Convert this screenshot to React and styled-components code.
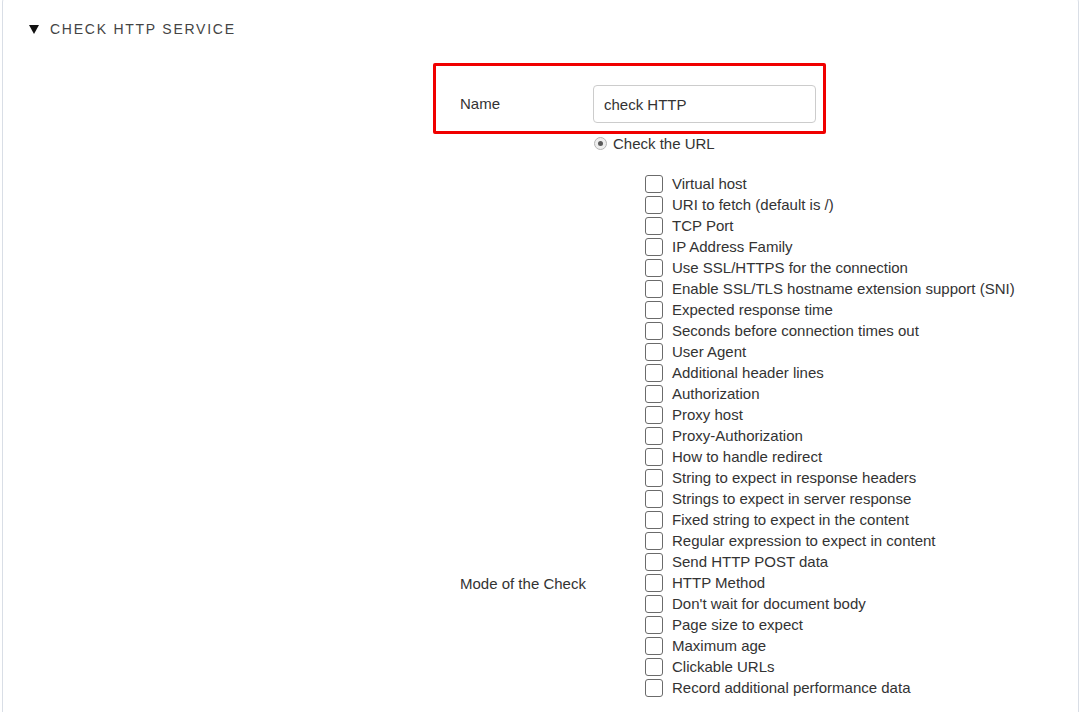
import React from "react";
import styled, { createGlobalStyle } from "styled-components";

const GlobalStyle = createGlobalStyle`
  html, body {
    margin: 0;
    padding: 0;
    background: #fff;
    font-family: "Liberation Sans", Arial, sans-serif;
    color: #333;
    overflow: hidden;
  }
`;

const options = [
  "Virtual host",
  "URI to fetch (default is /)",
  "TCP Port",
  "IP Address Family",
  "Use SSL/HTTPS for the connection",
  "Enable SSL/TLS hostname extension support (SNI)",
  "Expected response time",
  "Seconds before connection times out",
  "User Agent",
  "Additional header lines",
  "Authorization",
  "Proxy host",
  "Proxy-Authorization",
  "How to handle redirect",
  "String to expect in response headers",
  "Strings to expect in server response",
  "Fixed string to expect in the content",
  "Regular expression to expect in content",
  "Send HTTP POST data",
  "HTTP Method",
  "Don't wait for document body",
  "Page size to expect",
  "Maximum age",
  "Clickable URLs",
  "Record additional performance data",
];

const App = () => {
  return <>
    <GlobalStyle />
    <Page>
      <Header>
        <Triangle />
        <Title>Check HTTP service</Title>
      </Header>

      <Form>
        {/* highlighted row */}
        <NameRow>
          <Label>Name</Label>
          <TextInput defaultValue="check HTTP" />
        </NameRow>

        <ModeRow>
          <Label offset={441}>Mode of the Check</Label>
          <Value>
            <RadioRow>
              <Radio />
              <span>Check the URL</span>
            </RadioRow>
            <OptionList>
              {options.map(opt => (
                <OptionRow key={opt}>
                  <Box />
                  <span>{opt}</span>
                </OptionRow>
              ))}
            </OptionList>
          </Value>
        </ModeRow>
      </Form>
    </Page>
  </>
}

export default App;

const Page = styled.div`
  margin: -4px 0 0 2px;
  min-height: 760px;
  border: 1px solid #d9dee6;
  border-radius: 6px;
  box-sizing: border-box;
`

const Header = styled.div`
  display: flex;
  align-items: center;
  padding: 23px 0 0 26px;
  height: 18px;
`

const Triangle = styled.span`
  width: 10px;
  height: 9px;
  background: #111;
  clip-path: polygon(0 0, 100% 0, 50% 100%);
  margin-right: 11px;
  margin-top: 1px;
`

const Title = styled.span`
  font-size: 14px;
  letter-spacing: 1.75px;
  text-transform: uppercase;
  color: #444;
`

const Form = styled.div`
  display: flex;
  flex-direction: column;
  align-items: flex-start;
  margin: 25px 0 0 430px;
  white-space: nowrap;
`

const NameRow = styled.div`
  display: flex;
  align-items: center;
  border: 3px solid #f00000;
  border-radius: 2px;
  padding: 19px 7px 8px 24px;
`

const Label = styled.div`
  width: 133px;
  flex-shrink: 0;
  font-size: 15px;
  line-height: 18px;
  color: #333;
  padding-top: ${p => p.offset || 0}px;
`

const TextInput = styled.input`
  width: 223px;
  height: 38px;
  box-sizing: border-box;
  border: 1px solid #ccc;
  border-radius: 4px;
  padding: 0 10px;
  font-family: "Liberation Sans", Arial, sans-serif;
  font-size: 15px;
  color: #333;
  outline: none;
`

const ModeRow = styled.div`
  display: flex;
  padding-left: 27px;
`

const Value = styled.div`
  display: flex;
  flex-direction: column;
`

const RadioRow = styled.div`
  display: flex;
  align-items: center;
  gap: 6px;
  height: 18px;
  font-size: 15px;
  color: #333;
`

const Radio = styled.span`
  width: 11px;
  height: 11px;
  flex-shrink: 0;
  border-radius: 50%;
  border: 1px solid #b5b5b5;
  background: #eee;
  display: flex;
  align-items: center;
  justify-content: center;
  margin-left: 1px;

  &::after {
    content: "";
    width: 5px;
    height: 5px;
    border-radius: 50%;
    background: #5a5a5a;
  }
`

const OptionList = styled.div`
  display: flex;
  flex-direction: column;
  margin-top: 21px;
  padding-left: 52px;
`

const OptionRow = styled.div`
  display: flex;
  align-items: center;
  gap: 9px;
  height: 21px;
  font-size: 15px;
  color: #333;
`

const Box = styled.span`
  width: 16px;
  height: 16px;
  flex-shrink: 0;
  border: 1px solid #6b6b6b;
  border-radius: 3px;
  background: #fff;
`
